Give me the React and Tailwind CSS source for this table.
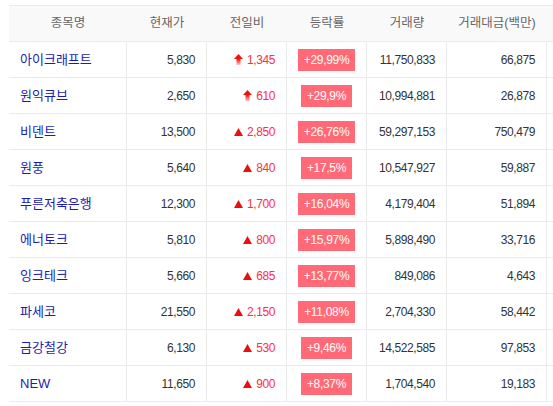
import React from 'react';

const ROWS = [
  { name: '아이크래프트', price: '5,830', diff: '1,345', upper: true, rate: '+29,99%', vol: '11,750,833', amt: '66,875' },
  { name: '원익큐브', price: '2,650', diff: '610', upper: true, rate: '+29,9%', vol: '10,994,881', amt: '26,878' },
  { name: '비덴트', price: '13,500', diff: '2,850', rate: '+26,76%', vol: '59,297,153', amt: '750,479' },
  { name: '원풍', price: '5,640', diff: '840', rate: '+17,5%', vol: '10,547,927', amt: '59,887' },
  { name: '푸른저축은행', price: '12,300', diff: '1,700', rate: '+16,04%', vol: '4,179,404', amt: '51,894' },
  { name: '에너토크', price: '5,810', diff: '800', rate: '+15,97%', vol: '5,898,490', amt: '33,716' },
  { name: '잉크테크', price: '5,660', diff: '685', rate: '+13,77%', vol: '849,086', amt: '4,643' },
  { name: '파세코', price: '21,550', diff: '2,150', rate: '+11,08%', vol: '2,704,330', amt: '58,442' },
  { name: '금강철강', price: '6,130', diff: '530', rate: '+9,46%', vol: '14,522,585', amt: '97,853' },
  { name: 'NEW', price: '11,650', diff: '900', rate: '+8,37%', vol: '1,704,540', amt: '19,183' },
];

const font = { fontFamily: '"Liberation Sans", "Noto Sans CJK KR", sans-serif' };

function UpperArrow() {
  return (
    <svg width="9" height="11" viewBox="0 0 9 11" className="shrink-0">
      <defs>
        <linearGradient id="stem" x1="0" y1="0" x2="0" y2="1">
          <stop offset="0" stopColor="#f01010" />
          <stop offset="1" stopColor="#ffc8c8" />
        </linearGradient>
      </defs>
      <polygon points="4.5,0 9,5 0,5" fill="#f01010" />
      <rect x="2.5" y="5" width="4" height="6" fill="url(#stem)" />
    </svg>
  );
}

function Triangle() {
  return (
    <svg width="9" height="8" viewBox="0 0 9 8" className="shrink-0">
      <polygon points="4.5,0 9,8 0,8" fill="#e81010" />
    </svg>
  );
}

export default function App() {
  return (
    <div className="w-[553px] h-[406px] bg-white overflow-hidden pt-[5px] pl-[9px]" style={font}>
      <div className="w-[560px]">
        <div className="flex h-[37px] border-y border-[#ebebeb] bg-[#f9f9f9] text-[12.5px] text-[#666]">
          <div className="w-[118px] flex items-center justify-center">종목명</div>
          <div className="w-[80px] flex items-center justify-center">현재가</div>
          <div className="w-[80px] flex items-center justify-center">전일비</div>
          <div className="w-[80px] flex items-center justify-center">등락률</div>
          <div className="w-[80px] flex items-center justify-center">거래량</div>
          <div className="w-[100px] flex items-center justify-center">거래대금(백만)</div>
          <div className="flex-1" />
        </div>
        {ROWS.map((r) => (
          <div key={r.name} className="flex h-[36px] border-b border-[#ebebeb] text-[12px]">
            <div className="w-[118px] border-r border-[#ebebeb] flex items-center pl-[11px] text-[13px] text-[#1c1cb0]">
              {r.name}
            </div>
            <div className="w-[80px] border-r border-[#ebebeb] flex items-center justify-end pr-[11px] text-[#333] tracking-[-0.4px]">
              {r.price}
            </div>
            <div className="w-[80px] border-r border-[#ebebeb] flex items-center justify-end gap-[4px] pr-[11px] text-[#ff3040] tracking-[-0.4px]">
              {r.upper ? <UpperArrow /> : <Triangle />}
              <span>{r.diff}</span>
            </div>
            <div className="w-[80px] border-r border-[#ebebeb] flex items-center justify-center">
              <span className="h-[22px] px-[6px] flex items-center bg-[#ff6a76] text-white tracking-[-0.3px]">
                {r.rate}
              </span>
            </div>
            <div className="w-[80px] border-r border-[#ebebeb] flex items-center justify-end pr-[11px] text-[#333] tracking-[-0.4px]">
              {r.vol}
            </div>
            <div className="w-[100px] border-r border-[#ebebeb] flex items-center justify-end pr-[11px] text-[#333] tracking-[-0.4px]">
              {r.amt}
            </div>
            <div className="flex-1" />
          </div>
        ))}
      </div>
    </div>
  );
}
